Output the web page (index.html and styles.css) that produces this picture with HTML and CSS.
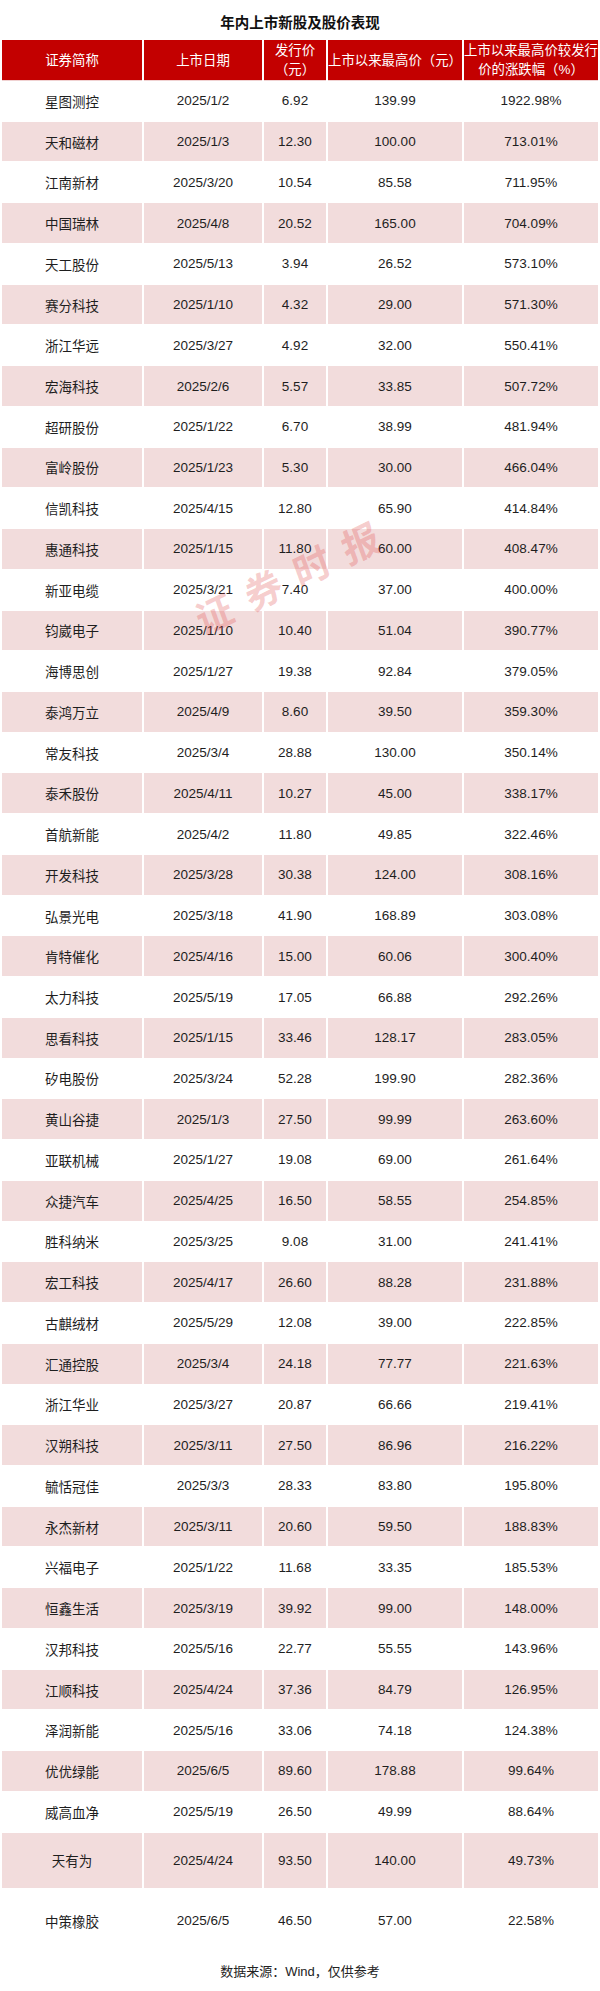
FILE: index.html
```html
<!DOCTYPE html>
<html lang="zh-CN">
<head>
<meta charset="utf-8">
<title>年内上市新股及股价表现</title>
<link rel="stylesheet" href="styles.css">
</head>
<body>
<div class="page">
  <h1 class="title">年内上市新股及股价表现</h1>
  <div class="table-wrap">
    <table class="ipo">
      <colgroup>
        <col class="c-name"><col class="c-date"><col class="c-price"><col class="c-high"><col class="c-pct">
      </colgroup>
      <thead>
        <tr>
          <th>证券简称</th>
          <th>上市日期</th>
          <th>发行价<br>（元）</th>
          <th>上市以来最高价（元）</th>
          <th>上市以来最高价较发行<br>价的涨跌幅（%）</th>
        </tr>
      </thead>
      <tbody>
        <tr><td>星图测控</td><td>2025/1/2</td><td>6.92</td><td>139.99</td><td>1922.98%</td></tr>
        <tr><td>天和磁材</td><td>2025/1/3</td><td>12.30</td><td>100.00</td><td>713.01%</td></tr>
        <tr><td>江南新材</td><td>2025/3/20</td><td>10.54</td><td>85.58</td><td>711.95%</td></tr>
        <tr><td>中国瑞林</td><td>2025/4/8</td><td>20.52</td><td>165.00</td><td>704.09%</td></tr>
        <tr><td>天工股份</td><td>2025/5/13</td><td>3.94</td><td>26.52</td><td>573.10%</td></tr>
        <tr><td>赛分科技</td><td>2025/1/10</td><td>4.32</td><td>29.00</td><td>571.30%</td></tr>
        <tr><td>浙江华远</td><td>2025/3/27</td><td>4.92</td><td>32.00</td><td>550.41%</td></tr>
        <tr><td>宏海科技</td><td>2025/2/6</td><td>5.57</td><td>33.85</td><td>507.72%</td></tr>
        <tr><td>超研股份</td><td>2025/1/22</td><td>6.70</td><td>38.99</td><td>481.94%</td></tr>
        <tr><td>富岭股份</td><td>2025/1/23</td><td>5.30</td><td>30.00</td><td>466.04%</td></tr>
        <tr><td>信凯科技</td><td>2025/4/15</td><td>12.80</td><td>65.90</td><td>414.84%</td></tr>
        <tr><td>惠通科技</td><td>2025/1/15</td><td>11.80</td><td>60.00</td><td>408.47%</td></tr>
        <tr><td>新亚电缆</td><td>2025/3/21</td><td>7.40</td><td>37.00</td><td>400.00%</td></tr>
        <tr><td>钧崴电子</td><td>2025/1/10</td><td>10.40</td><td>51.04</td><td>390.77%</td></tr>
        <tr><td>海博思创</td><td>2025/1/27</td><td>19.38</td><td>92.84</td><td>379.05%</td></tr>
        <tr><td>泰鸿万立</td><td>2025/4/9</td><td>8.60</td><td>39.50</td><td>359.30%</td></tr>
        <tr><td>常友科技</td><td>2025/3/4</td><td>28.88</td><td>130.00</td><td>350.14%</td></tr>
        <tr><td>泰禾股份</td><td>2025/4/11</td><td>10.27</td><td>45.00</td><td>338.17%</td></tr>
        <tr><td>首航新能</td><td>2025/4/2</td><td>11.80</td><td>49.85</td><td>322.46%</td></tr>
        <tr><td>开发科技</td><td>2025/3/28</td><td>30.38</td><td>124.00</td><td>308.16%</td></tr>
        <tr><td>弘景光电</td><td>2025/3/18</td><td>41.90</td><td>168.89</td><td>303.08%</td></tr>
        <tr><td>肯特催化</td><td>2025/4/16</td><td>15.00</td><td>60.06</td><td>300.40%</td></tr>
        <tr><td>太力科技</td><td>2025/5/19</td><td>17.05</td><td>66.88</td><td>292.26%</td></tr>
        <tr><td>思看科技</td><td>2025/1/15</td><td>33.46</td><td>128.17</td><td>283.05%</td></tr>
        <tr><td>矽电股份</td><td>2025/3/24</td><td>52.28</td><td>199.90</td><td>282.36%</td></tr>
        <tr><td>黄山谷捷</td><td>2025/1/3</td><td>27.50</td><td>99.99</td><td>263.60%</td></tr>
        <tr><td>亚联机械</td><td>2025/1/27</td><td>19.08</td><td>69.00</td><td>261.64%</td></tr>
        <tr><td>众捷汽车</td><td>2025/4/25</td><td>16.50</td><td>58.55</td><td>254.85%</td></tr>
        <tr><td>胜科纳米</td><td>2025/3/25</td><td>9.08</td><td>31.00</td><td>241.41%</td></tr>
        <tr><td>宏工科技</td><td>2025/4/17</td><td>26.60</td><td>88.28</td><td>231.88%</td></tr>
        <tr><td>古麒绒材</td><td>2025/5/29</td><td>12.08</td><td>39.00</td><td>222.85%</td></tr>
        <tr><td>汇通控股</td><td>2025/3/4</td><td>24.18</td><td>77.77</td><td>221.63%</td></tr>
        <tr><td>浙江华业</td><td>2025/3/27</td><td>20.87</td><td>66.66</td><td>219.41%</td></tr>
        <tr><td>汉朔科技</td><td>2025/3/11</td><td>27.50</td><td>86.96</td><td>216.22%</td></tr>
        <tr><td>毓恬冠佳</td><td>2025/3/3</td><td>28.33</td><td>83.80</td><td>195.80%</td></tr>
        <tr><td>永杰新材</td><td>2025/3/11</td><td>20.60</td><td>59.50</td><td>188.83%</td></tr>
        <tr><td>兴福电子</td><td>2025/1/22</td><td>11.68</td><td>33.35</td><td>185.53%</td></tr>
        <tr><td>恒鑫生活</td><td>2025/3/19</td><td>39.92</td><td>99.00</td><td>148.00%</td></tr>
        <tr><td>汉邦科技</td><td>2025/5/16</td><td>22.77</td><td>55.55</td><td>143.96%</td></tr>
        <tr><td>江顺科技</td><td>2025/4/24</td><td>37.36</td><td>84.79</td><td>126.95%</td></tr>
        <tr><td>泽润新能</td><td>2025/5/16</td><td>33.06</td><td>74.18</td><td>124.38%</td></tr>
        <tr><td>优优绿能</td><td>2025/6/5</td><td>89.60</td><td>178.88</td><td>99.64%</td></tr>
        <tr><td>威高血净</td><td>2025/5/19</td><td>26.50</td><td>49.99</td><td>88.64%</td></tr>
        <tr class="row-tall"><td>天有为</td><td>2025/4/24</td><td>93.50</td><td>140.00</td><td>49.73%</td></tr>
        <tr class="row-last"><td>中策橡胶</td><td>2025/6/5</td><td>46.50</td><td>57.00</td><td>22.58%</td></tr>
      </tbody>
    </table>
    <div class="watermark" aria-hidden="true"><span>证</span><span>券</span><span>时</span><span>报</span></div>
  </div>
  <p class="source">数据来源：Wind，仅供参考</p>
</div>
</body>
</html>
```

FILE: styles.css
```css
html, body {
  margin: 0;
  padding: 0;
  background: #ffffff;
}

.page {
  width: 600px;
  font-family: "Liberation Sans", "Noto Sans CJK SC", sans-serif;
  color: #1e1e1e;
}

.title {
  margin: 0;
  height: 39px;
  line-height: 46px;
  font-size: 14.5px;
  font-weight: bold;
  text-align: center;
  color: #111;
}

.table-wrap {
  position: relative;
  overflow: hidden;
}

.ipo {
  width: 600px;
  table-layout: fixed;
  border-collapse: separate;
  border-spacing: 2px 1px;
}

.c-name { width: 140px; }
.c-date { width: 118px; }
.c-price { width: 62px; }
.c-high { width: 134px; }
.c-pct { width: 134px; }

.ipo th {
  height: 40px;
  padding: 0;
  background: #c30000;
  color: #ffffff;
  font-weight: normal;
  font-size: 13.4px;
  line-height: 19px;
  text-align: center;
  white-space: nowrap;
  box-shadow: 0 1px 0 #f0d2d2;
}

.ipo td {
  height: 39.74px;
  padding: 0;
  font-size: 13.5px;
  text-align: center;
  vertical-align: middle;
  white-space: nowrap;
}

.ipo tbody tr:nth-child(even) td {
  background: #f2dcdc;
}

.ipo tbody tr.row-tall td {
  height: 55px;
}

.ipo tbody tr.row-last td {
  height: 64px;
}

.watermark {
  position: absolute;
  left: 187px;
  top: 518px;
  width: 200px;
  height: 40px;
  display: flex;
  justify-content: space-between;
  align-items: center;
  font-family: "Noto Sans CJK SC", sans-serif;
  font-size: 38px;
  line-height: 40px;
  font-weight: bold;
  color: rgba(222, 60, 60, 0.26);
  transform: rotate(-26deg) skewX(-6deg);
  pointer-events: none;
}

.source {
  margin: 0;
  height: 36px;
  line-height: 36px;
  text-align: center;
  font-size: 13px;
  color: #222;
}
```
